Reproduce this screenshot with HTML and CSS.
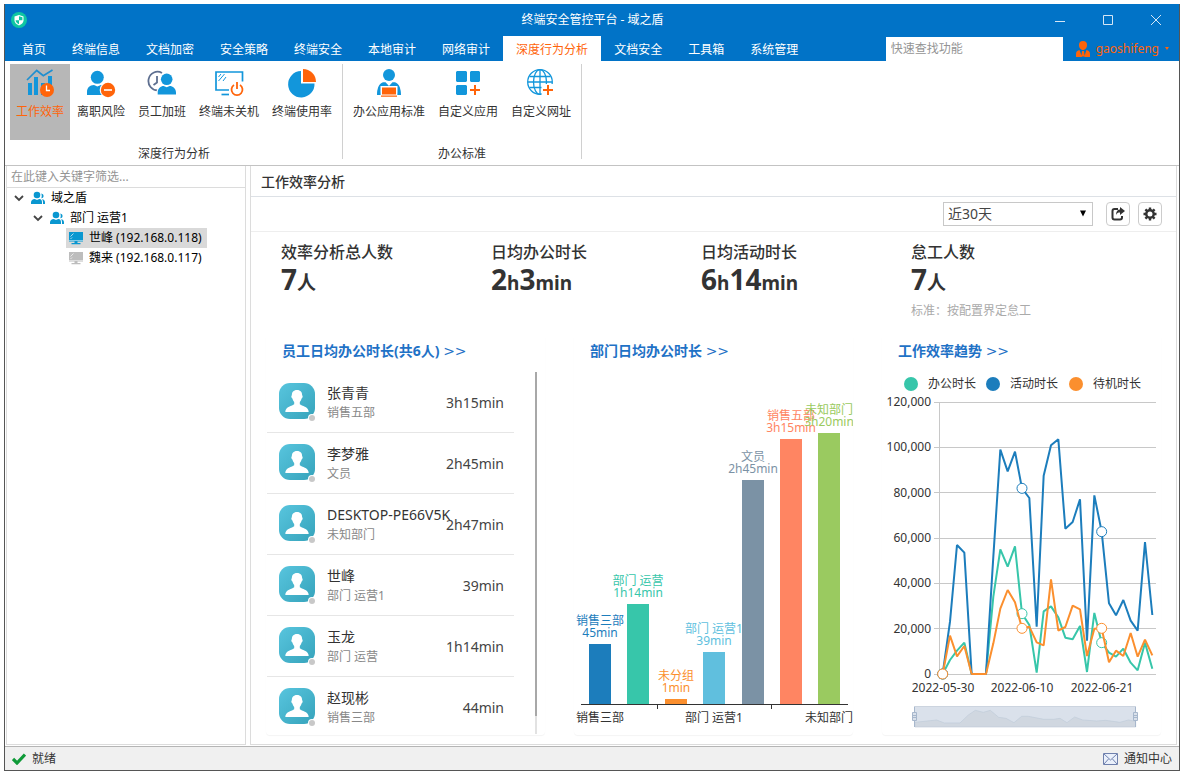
FILE: index.html
```html
<!DOCTYPE html>
<html lang="zh-CN">
<head>
<meta charset="utf-8">
<title>终端安全管控平台 - 域之盾</title>
<link rel="stylesheet" href="styles.css">
</head>
<body>
<svg class="defs" width="0" height="0" aria-hidden="true">
  <defs>
    <linearGradient id="avatar-bg" x1="0" y1="0" x2="1" y2="1">
      <stop offset="0" stop-color="#58c5de"/><stop offset="1" stop-color="#36a3bb"/>
    </linearGradient>
    <symbol id="avatar" viewBox="0 0 37 39">
      <rect x="0" y="0" width="36" height="36" rx="11" fill="url(#avatar-bg)"/>
      <path d="M18 7c3.600 0 5.300 2.300 5.100 5.200 .9.300.7 2.600-.5 3.400-.4 1.600-1 2.500-1.800 3.300v2.300c1.800 1.800 8.900 2.200 8.900 7.800H6.300c0-5.600 7.100-6 8.900-7.800v-2.300c-.8-.8-1.400-1.700-1.800-3.300-1.200-.8-1.400-3.100-.5-3.400C12.700 9.300 14.400 7 18 7z" fill="#fff"/>
      <circle cx="33" cy="35" r="4" fill="#fff"/><circle cx="33" cy="35" r="3" fill="#c8c8c8"/>
    </symbol>
    <symbol id="people" viewBox="0 0 14 14">
      <g fill="#0a97d0"><circle cx="6" cy="4" r="3.300"/><path d="M0 13v-1.500C0 9.300 1.600 8 3.800 8L6 9l2.200-1c2.200 0 2.800 1.300 2.800 3.500V13z"/><path d="M10.200 2.500c1.800.3 2.600 1.600 2.300 3-.2 1.200-1 1.800-2.200 1.700.6-1.500.7-3.100-.1-4.700zM11 8.200c2 .2 3 1.600 3 3.300V13h-2v-1.700c0-1.300-.3-2.300-1-3.100z"/></g>
    </symbol>
    <symbol id="monitor" viewBox="0 0 14 14">
      <path d="M0 1h14v9.500H0zM5.500 10h3v2h-3zM2.500 12h9v1.300h-9z" fill="currentColor"/>
      <path d="M1.500 5.500l3-3M1.500 8L3 6.500" stroke="#fff" stroke-opacity=".75" stroke-width=".9"/><path d="M0 9.500h14" stroke="#fff" stroke-width=".5"/>
    </symbol>
    <symbol id="chevron" viewBox="0 0 10 10"><path d="M1 3l4 4 4-4" fill="none" stroke="#444" stroke-width="1.800"/></symbol>
  </defs>
</svg>

<div class="window">
  <header class="titlebar">
    <svg class="app-logo" viewBox="0 0 16 16" aria-hidden="true">
      <circle cx="8" cy="8" r="8" fill="#0fc6a2"/>
      <path d="M8 3l4.500 1.500v3.700c0 2.500-2 4.100-4.500 5.300-2.500-1.200-4.500-2.800-4.500-5.300V4.500z" fill="#fff"/>
      <path d="M8 4.200l3.400 1.100v2.900H8zM4.600 8.200H8v4.100C6 11.200 4.600 10 4.600 8.200z" fill="#0fc6a2"/>
    </svg>
    <h1 class="app-title">终端安全管控平台 - 域之盾</h1>
    <div class="window-controls">
      <button type="button" aria-label="最小化"><svg viewBox="0 0 12 12"><path d="M1 7.500h10"/></svg></button>
      <button type="button" aria-label="最大化"><svg viewBox="0 0 12 12"><path d="M1.500 1.500h9v9h-9z"/></svg></button>
      <button type="button" aria-label="关闭"><svg viewBox="0 0 12 12"><path d="M1 1l10 10M11 1L1 11"/></svg></button>
    </div>
  </header>

  <div class="menubar">
    <nav class="tabs">
      <a href="#">首页</a><a href="#">终端信息</a><a href="#">文档加密</a><a href="#">安全策略</a><a href="#">终端安全</a><a href="#">本地审计</a><a href="#">网络审计</a><a href="#" class="active">深度行为分析</a><a href="#">文档安全</a><a href="#">工具箱</a><a href="#">系统管理</a>
    </nav>
    <input class="search" type="text" placeholder="快速查找功能" aria-label="快速查找功能">
    <button class="user" type="button">
      <svg class="user-icon" viewBox="0 0 14 16" aria-hidden="true"><path d="M7 0a4 4 0 0 1 4 4c0 2.600-1.600 5-4 5S3 6.600 3 4a4 4 0 0 1 4-4zM3.500 9L6 16H0v-3c0-2.500 1.500-3.700 3.500-4zM10.500 9L8 16h6v-3c0-2.500-1.500-3.700-3.500-4zM6 10h2l.7 5.500H5.300z" fill="#ff640a"/></svg>
      <span>gaoshifeng</span>
      <svg class="user-caret" viewBox="0 0 4 3" aria-hidden="true"><path d="M0 0h4L2 3z" fill="#ff640a"/></svg>
    </button>
  </div>

  <div class="ribbon">
    <section class="ribbon-group">
      <div class="ribbon-items">
        <button type="button" class="ribbon-button active">
          <svg viewBox="0 0 30 30"><path d="M3 15h4v12H3zM9 9h4v18H9zM16 15h4v12h-4zM23 8h4v19h-4z" fill="#1296db"/><path d="M2 12l9.700-9.500 6.600 5.200L27.500 2" fill="none" stroke="#1e8fd0" stroke-width="1.700"/><circle cx="22" cy="22" r="7" fill="#ff640a"/><path d="M21.500 17.500v5H25" fill="none" stroke="#fff" stroke-width="1.300"/></svg>
          <span>工作效率</span></button>
        <button type="button" class="ribbon-button">
          <svg viewBox="0 0 30 30"><g fill="#1296db"><circle cx="11.300" cy="9.300" r="6.500"/><path d="M1 27v-3c0-4 2.500-7 7-7l3.300 1.500L15 17c4 0 6.500 3 6.500 7v3z"/></g><circle cx="22" cy="22" r="8.300" fill="#fff"/><circle cx="22" cy="22" r="7.200" fill="#ff640a"/><path d="M18 22h8" stroke="#fff" stroke-width="1.600"/></svg>
          <span>离职风险</span></button>
        <button type="button" class="ribbon-button">
          <svg viewBox="0 0 30 30"><path d="M15 5A9 9.300 0 1 0 11 22.300M10 8v6.500L6.500 17" fill="none" stroke="#5e6f90" stroke-width="1.800"/><circle cx="19.700" cy="11.300" r="7.200" fill="#fff"/><path d="M9.500 28v-3c0-5 3-7 7-7h7c4 0 7 2 7 7v3z" fill="#fff"/><g fill="#1296db"><circle cx="19.700" cy="11.300" r="5.800"/><path d="M10.700 26.500v-2c0-4 3-6.500 6-6.500l3 1.200 3-1.200c3 0 6.300 2.500 6.300 6.500v2z"/></g></svg>
          <span>员工加班</span></button>
        <button type="button" class="ribbon-button">
          <svg viewBox="0 0 30 30"><path d="M15 22H2V4h26.500v9.500" fill="none" stroke="#1296db" stroke-width="1.700"/><path d="M7.500 26.500h7.500" stroke="#1296db" stroke-width="1.700"/><path d="M4.500 13l6-7M9 13l3-4M4.500 9l2.500-3" fill="none" stroke="#1296db"/><path d="M20 17a5.500 5.500 0 1 0 6 0M23 14v7" fill="none" stroke="#ff640a" stroke-width="1.800"/></svg>
          <span>终端未关机</span></button>
        <button type="button" class="ribbon-button">
          <svg viewBox="0 0 30 30"><path d="M14 3v12.500h13.500A13.200 13.200 0 1 1 14 3z" fill="#1296db"/><path d="M16 1a13 13 0 0 1 13 13H16z" fill="#ff640a"/></svg>
          <span>终端使用率</span></button>
      </div>
      <h2 class="ribbon-label">深度行为分析</h2>
    </section>
    <section class="ribbon-group">
      <div class="ribbon-items">
        <button type="button" class="ribbon-button">
          <svg viewBox="0 0 30 30"><g fill="#1296db"><circle cx="15" cy="7" r="6"/><path d="M3 27c.3-6 1.500-11.500 6-12.700h2.500L15 18l3.500-3.700H21c4.500 1.200 5.700 6.700 6 12.700z"/></g><path d="M6.500 18h17v11h-17z" fill="#fff"/><path d="M3.500 26c0-3 .5-6 2-8l.8 9H3.500zM26.500 26c0-3-.5-6-2-8l-.8 9h2.800z" fill="#1296db"/><path d="M8 19.500h14v7H8zM7 27.500h16v1.200H7z" fill="#ff640a"/></svg>
          <span>办公应用标准</span></button>
        <button type="button" class="ribbon-button">
          <svg viewBox="0 0 30 30"><path d="M4 3h9l1 1v9l-1 1H4l-1-1V4zM18 3h8l1 1v9l-1 1h-8l-1-1V4zM4 17h9l1 1v8l-1 1H4l-1-1v-8z" fill="#1296db"/><path d="M17 22h10M22 17v10" stroke="#ff640a" stroke-width="2"/></svg>
          <span>自定义应用</span></button>
        <button type="button" class="ribbon-button">
          <svg viewBox="0 0 30 30"><g fill="none" stroke="#1296db" stroke-width="1.300"><circle cx="14" cy="14" r="12.300"/><ellipse cx="14" cy="14" rx="6.500" ry="12.300"/><path d="M14 1.500v25M2 14h24M3.500 8.500h21M3.500 19.500h21"/></g><path d="M15.500 16h13v13h-13z" fill="#fff"/><path d="M17 22h10M22 17v10" stroke="#ff640a" stroke-width="2"/></svg>
          <span>自定义网址</span></button>
      </div>
      <h2 class="ribbon-label">办公标准</h2>
    </section>
  </div>

  <div class="workspace">
    <aside class="sidebar">
      <input class="tree-filter" type="text" placeholder="在此键入关键字筛选..." aria-label="在此键入关键字筛选">
      <ul class="tree">
        <li>
          <div class="tree-row"><svg class="chevron"><use href="#chevron"/></svg><svg class="node-icon"><use href="#people"/></svg><span>域之盾</span></div>
          <ul>
            <li>
              <div class="tree-row"><svg class="chevron"><use href="#chevron"/></svg><svg class="node-icon"><use href="#people"/></svg><span>部门 运营1</span></div>
              <ul class="tree-leaves">
                <li><a class="tree-row leaf selected" href="#"><svg class="node-icon online"><use href="#monitor"/></svg><span>世峰 (192.168.0.118)</span></a></li>
                <li><a class="tree-row leaf" href="#"><svg class="node-icon offline"><use href="#monitor"/></svg><span>魏来 (192.168.0.117)</span></a></li>
              </ul>
            </li>
          </ul>
        </li>
      </ul>
    </aside>

    <main class="content">
      <h2 class="page-title">工作效率分析</h2>
      <div class="toolbar">
        <div class="select-box">
          <select aria-label="时间范围"><option>近30天</option></select>
          <svg viewBox="0 0 6 6" aria-hidden="true"><path d="M0 0h6L3 6z" fill="#000"/></svg>
        </div>
        <div class="tool-buttons">
          <button type="button" aria-label="导出"><svg viewBox="0 0 14 14"><path d="M7 2H3.500Q1.500 2 1.500 4v6.500q0 2 2 2H9q2 0 2-2V9" fill="none" stroke="#333" stroke-width="2"/><path d="M9 0l5 4-5 4V5.500c-2 0-3 .5-4 2.500 0-3.500 1.500-5.500 4-5.500z" fill="#333"/></svg></button>
          <button type="button" aria-label="设置"><svg viewBox="0 0 14 14"><circle cx="7" cy="7" r="3.700" fill="none" stroke="#333" stroke-width="2.400"/><path d="M7 .5V3M7 11v2.500M.5 7H3M11 7h2.500M2.400 2.400l1.800 1.800M9.800 9.800l1.800 1.800M2.400 11.600l1.800-1.800M9.800 4.200l1.800-1.800" stroke="#333" stroke-width="2.400"/></svg></button>
        </div>
      </div>

      <div class="report">
        <div class="stats">
          <section class="stat"><h3>效率分析总人数</h3><p class="figure">7<small>人</small></p></section>
          <section class="stat"><h3>日均办公时长</h3><p class="figure">2<small>h</small>3<small>min</small></p></section>
          <section class="stat"><h3>日均活动时长</h3><p class="figure">6<small>h</small>14<small>min</small></p></section>
          <section class="stat"><h3>怠工人数</h3><p class="figure">7<small>人</small></p><p class="note">标准：按配置界定怠工</p></section>
        </div>

        <div class="cards">
          <section class="card">
            <h3 class="card-title"><a href="#">员工日均办公时长(共6人) <span class="more">&gt;&gt;</span></a></h3>
            <div class="staff">
              <ul class="staff-list">
                <li><svg class="avatar"><use href="#avatar"/></svg><div class="person"><strong>张青青</strong><span>销售五部</span></div><time>3h15min</time></li>
                <li><svg class="avatar"><use href="#avatar"/></svg><div class="person"><strong>李梦雅</strong><span>文员</span></div><time>2h45min</time></li>
                <li><svg class="avatar"><use href="#avatar"/></svg><div class="person"><strong>DESKTOP-PE66V5K</strong><span>未知部门</span></div><time>2h47min</time></li>
                <li><svg class="avatar"><use href="#avatar"/></svg><div class="person"><strong>世峰</strong><span>部门 运营1</span></div><time>39min</time></li>
                <li><svg class="avatar"><use href="#avatar"/></svg><div class="person"><strong>玉龙</strong><span>部门 运营</span></div><time>1h14min</time></li>
                <li><svg class="avatar"><use href="#avatar"/></svg><div class="person"><strong>赵现彬</strong><span>销售三部</span></div><time>44min</time></li>
              </ul>
              <div class="scrollbar"><div class="thumb"></div></div>
            </div>
          </section>

          <section class="card">
            <h3 class="card-title"><a href="#">部门日均办公时长 <span class="more">&gt;&gt;</span></a></h3>
            <svg class="chart" viewBox="0 0 279 363" role="img" aria-label="部门日均办公时长">
              <g text-anchor="middle">
                <g fill="#1c7dbc"><rect x="15" y="272" width="22" height="60"/><text x="26" y="253">销售三部</text><text x="26" y="265">45min</text></g>
                <g fill="#37c6aa"><rect x="53" y="232" width="22" height="100"/><text x="64" y="213">部门 运营</text><text x="64" y="225">1h14min</text></g>
                <g fill="#fb8f2e"><rect x="91" y="327" width="22" height="5"/><text x="102" y="308">未分组</text><text x="102" y="320">1min</text></g>
                <g fill="#60bfde"><rect x="129" y="280" width="22" height="52"/><text x="140" y="261">部门 运营1</text><text x="140" y="273">39min</text></g>
                <g fill="#7b92a5"><rect x="168" y="108" width="22" height="224"/><text x="179" y="89">文员</text><text x="179" y="101">2h45min</text></g>
                <g fill="#ff8562"><rect x="206" y="67" width="22" height="265"/><text x="217" y="48">销售五部</text><text x="217" y="60">3h15min</text></g>
                <g fill="#9aca60"><rect x="244" y="61" width="22" height="271"/><text x="255" y="42">未知部门</text><text x="255" y="54">3h20min</text></g>
                <path d="M7 332.500h267M83.500 333v4M197.500 333v4" stroke="#333" fill="none"/>
                <g fill="#333"><text x="26" y="350">销售三部</text><text x="140" y="350">部门 运营1</text><text x="255" y="350">未知部门</text></g>
              </g>
            </svg>
          </section>

          <section class="card">
            <h3 class="card-title"><a href="#">工作效率趋势 <span class="more">&gt;&gt;</span></a></h3>
            <svg class="chart" viewBox="0 0 279 363" role="img" aria-label="工作效率趋势">
              <circle cx="29" cy="12" r="7" fill="#37c6aa"/><circle cx="111" cy="12" r="7" fill="#1c7dbc"/><circle cx="194" cy="12" r="7" fill="#fb8f2e"/>
              <g fill="#333"><text x="46" y="16">办公时长</text><text x="128" y="16">活动时长</text><text x="211" y="16">待机时长</text></g>
              <path d="M52 30.500h222M52 75.500h222M52 120.500h222M52 166.500h222M52 211.500h222M52 256.500h222M52 302.500h222M57.500 30v277" fill="none" stroke="#c8c8c8"/>
              <g fill="#333" text-anchor="end"><text x="49" y="34">120,000</text><text x="49" y="79">100,000</text><text x="49" y="125">80,000</text><text x="49" y="170">60,000</text><text x="49" y="215">40,000</text><text x="49" y="261">20,000</text><text x="49" y="306">0</text></g>
              <g transform="translate(-2 -2) scale(.33333)" fill="none" stroke-width="6" stroke-linejoin="bevel">
                <g stroke="#37c6aa"><polyline points="188,912 210,870 231,842 253,818 275,912 296,912 318,912 340,680 361,538 383,590 405,529 426,731 448,765 470,908 491,724 513,709 535,742 556,803 578,808 600,768 621,906 643,729 665,818 687,848 708,860 730,836 752,878 773,901 795,818 817,896"/><g fill="#fff" stroke-width="3"><circle cx="188" cy="912" r="15"/><circle cx="426" cy="731" r="15"/><circle cx="665" cy="818" r="15"/></g></g>
                <g stroke="#1c7dbc"><polyline points="188,912 210,755 231,525 253,548 275,912 296,912 318,912 340,560 361,239 383,304 405,245 426,355 448,384 470,770 491,317 513,226 535,208 556,476 578,456 600,388 621,812 643,376 665,485 687,700 708,736 730,690 752,752 773,782 795,516 817,735"/><g fill="#fff" stroke-width="3"><circle cx="188" cy="912" r="15"/><circle cx="426" cy="355" r="15"/><circle cx="665" cy="485" r="15"/></g></g>
                <g stroke="#fb8f2e"><polyline points="188,912 210,797 231,859 253,828 275,912 296,912 318,912 340,820 361,716 383,660 405,697 426,775 448,770 470,817 491,826 513,628 535,782 556,771 578,707 600,718 621,858 643,776 665,775 687,877 708,842 730,858 752,789 773,860 795,809 817,856"/><g fill="#fff" stroke-width="3"><circle cx="188" cy="912" r="15"/><circle cx="426" cy="775" r="15"/><circle cx="665" cy="775" r="15"/></g></g>
              </g>
              <g fill="#333" text-anchor="middle"><text x="61" y="320">2022-05-30</text><text x="140" y="320">2022-06-10</text><text x="220" y="320">2022-06-21</text></g>
              <rect x="32" y="335" width="222" height="20" fill="#dae1eb"/>
              <g transform="translate(-2 298) scale(.33333)"><polygon points="105,171 105,157 170,150 193,159 240,159 265,135 286,121 310,127 331,121 356,142 378,145 402,158 425,139 445,139 492,148 520,148 540,145 561,158 584,141 608,150 650,153 677,151 720,157 745,150 767,154 767,171" fill="#d0d7e0" stroke="#c0cbd9" stroke-width="2"/></g>
              <path d="M32 334.500h222" stroke="#ccd4df"/><path d="M32.500 335v20M253.500 335v20" stroke="#a7b7cc"/>
              <g fill="#dae1eb" stroke="#a7b7cc"><path d="M30.500 340.500h4v8h-4zM251.500 340.500h4v8h-4zM30.500 343.500h4M30.500 345.500h4M251.500 343.500h4M251.500 345.500h4"/></g>
            </svg>
          </section>
        </div>
      </div>
    </main>
  </div>

  <footer class="statusbar">
    <span class="status-item"><svg class="check" viewBox="0 0 14 12" aria-hidden="true"><path d="M1 6l4 4 8-8.500" fill="none" stroke="#0f9a38" stroke-width="3.200"/></svg>就绪</span>
    <a class="status-item" href="#"><svg class="mail" viewBox="0 0 15 12" aria-hidden="true"><path d="M.5.500h14v11H.5z" fill="#eaf0fb" stroke="#6f80ad"/><path d="M1 1l6.500 6L14 1M1 11l4.500-5M14 11L9.500 6" fill="none" stroke="#6f80ad"/></svg>通知中心</a>
  </footer>
</div>
</body>
</html>
```
FILE: styles.css
```css
* { box-sizing: border-box; }

body {
  margin: 0;
  padding: 4px;
  background: #fff;
  color: #333;
  font-family: "Noto Sans", "Noto Sans CJK SC", sans-serif;
  font-size: 12px;
  line-height: 20px;
}

h1, h2, h3, p, ul { margin: 0; padding: 0; font-weight: 400; }
ul { list-style: none; }
a { color: inherit; text-decoration: none; }
button, input, select { font: inherit; color: inherit; border: 0; padding: 0; margin: 0; background: none; border-radius: 0; }
svg { display: block; flex: none; }
.defs { position: absolute; }

.window {
  display: flex;
  flex-direction: column;
  min-height: calc(100vh - 8px);
  border: 1px solid #555;
  border-top: 0;
}

/* Title bar and menu */
.titlebar {
  display: grid;
  grid-template-columns: 1fr auto 1fr;
  align-items: center;
  height: 32px;
  padding: 0 5px 0 6px;
  background: #0173c7;
  color: #fff;
}
.app-logo { width: 16px; height: 16px; }
.app-title { font-size: 12px; line-height: 20px; }
.window-controls { display: flex; justify-content: flex-end; gap: 12px; }
.window-controls button { display: grid; place-items: center; width: 36px; height: 32px; }
.window-controls svg { width: 12px; height: 12px; fill: none; stroke: #d5e6f5; }

.menubar { display: flex; height: 25px; background: #0173c7; color: #fff; }
.tabs { display: flex; flex: 1; padding-left: 4px; white-space: nowrap; }
.tabs a { height: 25px; padding: 0 13px; line-height: 28px; }
.tabs .active { background: #fff; color: #ff640a; }
.search { width: 177px; margin-top: 1px; padding: 0 5px; background: #fff; color: #333; }
.search::placeholder, .tree-filter::placeholder { color: #949494; opacity: 1; }
.user { display: flex; align-items: center; gap: 6px; padding: 0 10px 0 13px; color: #ff640a; }
.user-icon { width: 14px; height: 16px; }
.user-caret { width: 4px; height: 3px; }

/* Ribbon */
.ribbon { display: flex; padding: 3px 0 6px; border-bottom: 1px solid #c3c3c3; background: #fff; }
.ribbon-group { padding: 0 4px; border-right: 1px solid #d0d0d0; }
.ribbon-group:first-child { padding-left: 5px; }
.ribbon-items { display: flex; gap: 1px; }
.ribbon-button { display: flex; flex-direction: column; align-items: center; gap: 4px; height: 76px; padding: 4px 6px; white-space: nowrap; }
.ribbon-button svg { width: 30px; height: 30px; }
.ribbon-button.active { background: #b7b7b7; color: #ff640a; }
.ribbon-label { padding-top: 4px; font-size: 12px; line-height: 19px; text-align: center; height: 19px; }

/* Workspace */
.workspace { display: flex; flex: 1; gap: 4px; padding: 0 2px 1px 1px; }
.sidebar { width: 240px; border: 1px solid #dcdcdc; border-top: 0; }
.tree-filter { display: block; width: 100%; height: 22px; padding: 0 4px; border-bottom: 1px solid #dcdcdc; }
.tree { color: #000; }
.tree ul { padding-left: 19px; }
.tree .tree-leaves { padding-left: 40px; }
.tree-row { display: flex; align-items: center; height: 20px; padding-left: 7px; white-space: nowrap; }
.chevron { width: 10px; height: 10px; margin-right: 7px; }
.node-icon { width: 14px; height: 14px; margin-right: 6px; }
.leaf { width: max-content; padding: 0 5px 0 3px; }
.selected { background: #d9d9d9; }
.online { color: #0a97d0; }
.offline { color: #bdbdbd; }

.content { flex: 1; min-width: 0; border: 1px solid #dcdcdc; border-top: 0; }
.page-title { padding: 2px 10px 0; border-bottom: 1px solid #dde1e6; font-size: 14px; font-weight: 500; line-height: 28px; }
.toolbar { display: flex; justify-content: flex-end; align-items: center; gap: 13px; height: 35px; padding-right: 14px; border-bottom: 1px solid #eee; }
.select-box { position: relative; width: 150px; }
.select-box select { display: block; width: 100%; height: 24px; padding: 0 4px; border: 1px solid #c8c8c8; appearance: none; font-size: 14px; color: #444; }
.select-box svg { position: absolute; right: 7px; top: 8px; width: 6px; height: 7px; pointer-events: none; }
.tool-buttons { display: flex; gap: 8px; }
.tool-buttons button { display: grid; place-items: center; width: 24px; height: 24px; border: 1px solid #ccc; border-radius: 4px; }
.tool-buttons svg { width: 14px; height: 14px; }

.report { padding: 8px 15px 9px; }
.stats { display: flex; padding-left: 15px; }
.stat { width: 210px; }
.stat h3 { font-size: 16px; font-weight: 500; line-height: 24px; }
.figure { height: 32px; font-size: 28px; font-weight: 700; line-height: 30px; }
.figure small { font-size: 19px; line-height: 1; }
.note { padding-top: 6px; line-height: 18px; color: #aaa; }

.cards { display: grid; grid-template-columns: repeat(3, minmax(0, 1fr)); gap: 29px; padding-top: 14px; }
.card { border-radius: 4px; box-shadow: 0 1px 1px #f4f4f4; }
.card-title { height: 38px; padding: 0 16px; font-size: 14px; font-weight: 700; line-height: 34px; color: #1f72c6; white-space: nowrap; }
.more { font-family: "DejaVu Sans", sans-serif; font-weight: 400; line-height: 1; }

.staff { display: flex; padding: 0 8px 1px 1px; }
.staff-list { flex: 1; min-width: 0; margin-right: 21px; }
.staff-list li { display: flex; height: 61px; padding: 11px 10px 0 12px; border-bottom: 1px solid #e6e6e6; }
.staff-list li:last-child { border-bottom: 0; height: 57px; }
.avatar { width: 37px; height: 39px; margin-right: 11px; }
.person { display: flex; flex-direction: column; flex: 1; min-width: 0; white-space: nowrap; }
.person strong { font-size: 14px; font-weight: 400; }
.person span { color: #888; }
.staff-list time { font-size: 14px; line-height: 40px; color: #444; }
.scrollbar { width: 2px; background: #e2e2e2; }
.thumb { height: 95%; background: #a8a8a8; }

.chart { width: 100%; height: auto; }
.chart text { font-size: 12px; }

/* Status bar */
.statusbar { display: flex; justify-content: space-between; height: 24px; padding: 0 7px; border-top: 1px solid #b5b5b5; background: #f0f0f0; }
.status-item { display: flex; align-items: center; gap: 6px; }
.check { width: 14px; height: 12px; }
.mail { width: 15px; height: 12px; }
```
